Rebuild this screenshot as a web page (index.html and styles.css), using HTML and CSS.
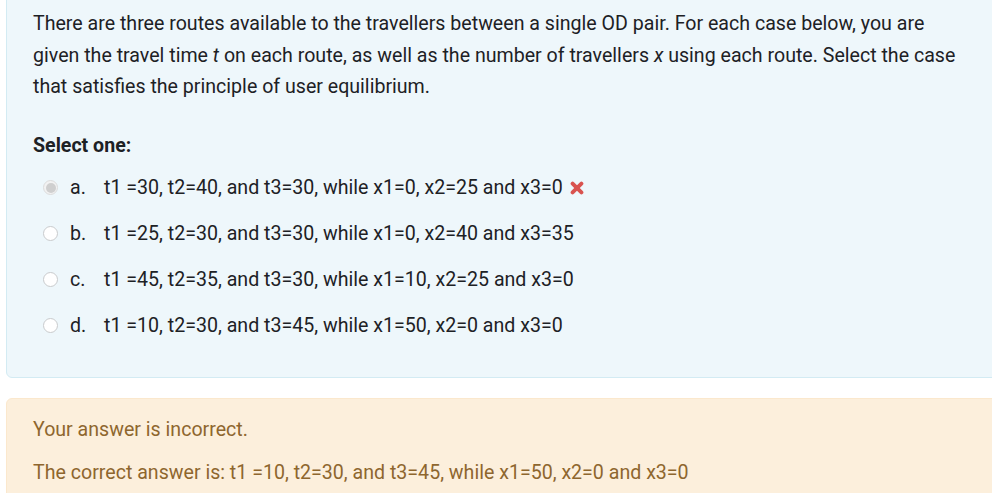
FILE: index.html
```html
<!DOCTYPE html>
<html lang="en">
<head>
<meta charset="utf-8">
<title>Question</title>
<link rel="stylesheet" href="styles.css">
</head>
<body>
<div class="que">
  <div class="formulation">
    <p class="qtext">There are three routes available to the travellers between a single OD pair. For each case below, you are given the travel time <i>t</i> on each route, as well as the number of travellers <i>x</i> using each route. Select the case that satisfies the principle of user equilibrium.</p>
    <div class="prompt">Select one:</div>
    <div class="answer">
      <div class="opt">
        <span class="radio checked"></span>
        <span class="num">a.</span>
        <span class="txt">t1 =30, t2=40, and t3=30, while x1=0, x2=25 and x3=0</span>
        <svg class="cross" width="14" height="14" viewBox="0 0 14 14"><path d="M2.6 2.6 L11.4 11.4 M11.4 2.6 L2.6 11.4" stroke="#d9534f" stroke-width="3.9" stroke-linecap="round"/></svg>
      </div>
      <div class="opt">
        <span class="radio"></span>
        <span class="num">b.</span>
        <span class="txt">t1 =25, t2=30, and t3=30, while x1=0, x2=40 and x3=35</span>
      </div>
      <div class="opt">
        <span class="radio"></span>
        <span class="num">c.</span>
        <span class="txt">t1 =45, t2=35, and t3=30, while x1=10, x2=25 and x3=0</span>
      </div>
      <div class="opt">
        <span class="radio"></span>
        <span class="num">d.</span>
        <span class="txt">t1 =10, t2=30, and t3=45, while x1=50, x2=0 and x3=0</span>
      </div>
    </div>
  </div>
  <div class="outcome">
    <p class="fb">Your answer is incorrect.</p>
    <p class="fb">The correct answer is: t1 =10, t2=30, and t3=45, while x1=50, x2=0 and x3=0</p>
  </div>
</div>
</body>
</html>
```
FILE: styles.css
```css
html, body {
  margin: 0;
  padding: 0;
  overflow: hidden;
  background: #ffffff;
}
body {
  font-family: Roboto, "Liberation Sans", sans-serif;
  font-size: 19.6px;
  line-height: 31.5px;
  color: #1d2125;
}
.que {
  width: 1040px;
  padding-left: 6px;
}
.formulation {
  margin-top: -10px;
  background: #eef7fb;
  border: 1px solid #d3ebf3;
  border-radius: 6px;
  padding: 17px 26px 28px 26px;
}
.qtext {
  margin: 0;
  width: 940px;
}
.prompt {
  font-weight: 700;
  margin-top: 27px;
}
.answer {
  margin-top: 4px;
}
.opt {
  display: flex;
  align-items: center;
  padding: 7px 0 7.5px 0;
}
.radio {
  box-sizing: border-box;
  width: 15px;
  height: 15px;
  border-radius: 50%;
  border: 1px solid #c9cbcd;
  background: #ffffff;
  margin-left: 10px;
  margin-right: 12px;
  flex: none;
  display: flex;
  align-items: center;
  justify-content: center;
}
.radio.checked {
  background: #f2f2f2;
  border-color: #dcdcdc;
}
.radio.checked::after {
  content: "";
  width: 10px;
  height: 10px;
  border-radius: 50%;
  background: #cfcfcf;
}
.num {
  width: 34px;
  flex: none;
}
.cross {
  margin-left: 7px;
}
.outcome {
  margin-top: 20px;
  background: #fcefdc;
  border: 1px solid #fbe8cd;
  border-radius: 6px;
  padding: 15px 26px 20px 26px;
  color: #8e662e;
}
.fb {
  margin: 0 0 11px 0;
}
```
